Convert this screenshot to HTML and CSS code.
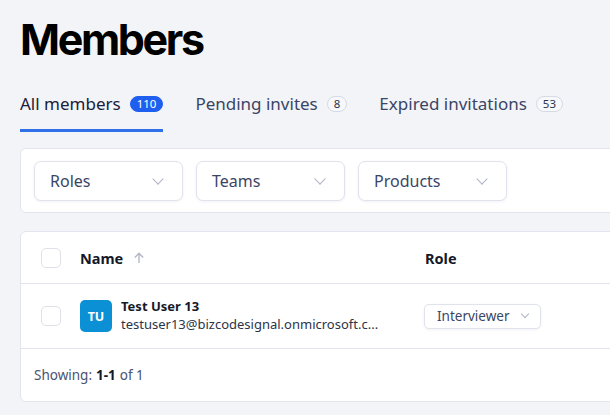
FILE: index.html
```html
<!DOCTYPE html>
<html lang="en">
<head>
    <meta charset="UTF-8">
    <title>Members</title>
    <link rel="stylesheet" href="styles.css">
</head>
<body>
    <div class="page">
        <h1 class="page-title">Members</h1>

        <!-- Tabs -->
        <div class="tabs">
            <div class="tab active">All members <span class="count">110</span></div>
            <div class="tab">Pending invites <span class="count">8</span></div>
            <div class="tab">Expired invitations <span class="count">53</span></div>
        </div>

        <!-- Filters -->
        <div class="card filters">
            <div class="select">Roles <span class="chev"></span></div>
            <div class="select">Teams <span class="chev"></span></div>
            <div class="select">Products <span class="chev"></span></div>
        </div>

        <!-- Members table -->
        <div class="card table">
            <div class="row head">
                <div class="cell check"><span class="box"></span></div>
                <div class="cell name">Name
                    <svg class="sort" width="12" height="12" viewBox="0 0 12 12"><path d="M6 11V1.5M1.8 5.5L6 1.3l4.2 4.2" fill="none" stroke="#b4b8c8" stroke-width="1.4"/></svg>
                </div>
                <div class="cell role">Role</div>
            </div>
            <div class="row member">
                <div class="cell check"><span class="box"></span></div>
                <div class="cell name">
                    <div class="avatar">TU</div>
                    <div class="who">
                        <div class="who-name">Test User 13</div>
                        <div class="who-mail">testuser13@bizcodesignal.onmicrosoft.c...</div>
                    </div>
                </div>
                <div class="cell role">
                    <div class="select small">Interviewer <span class="chev"></span></div>
                </div>
            </div>
            <div class="foot">Showing: <b>1-1</b> of 1</div>
        </div>
    </div>
</body>
</html>
```

FILE: styles.css
```css
:root {
    --bg: #f3f4f8;
    --line: #e3e5ee;
    --ink: #11131a;
    --text: #3d4663;
    --blue: #2f6fe8;
}

body {
    margin: 0;
    background: var(--bg);
    font-family: 'Noto Sans', 'Open Sans', sans-serif;
    color: var(--text);
    overflow: hidden;
}

.page {
    width: 720px;
    padding: 0 0 0 20px;
}

.page-title {
    font-family: Inter, sans-serif;
    font-size: 43px;
    font-weight: 700;
    letter-spacing: -0.055em;
    color: #000;
    margin: 0;
    padding-top: 12px;
    line-height: 54px;
}

/* tabs: underline sits 16px above the filter card */
.tabs {
    display: flex;
    gap: 32px;
    margin-top: 20px;
    height: 62px;
}
.tab {
    font-size: 17px;
    color: #3a4566;
    height: 46px;
    display: flex;
    align-items: center;
    gap: 9px;
    padding-bottom: 8px;
    box-sizing: border-box;
    border-bottom: 3px solid transparent;
}
.tab.active {
    color: #1a2038;
    border-bottom-color: var(--blue);
}
.count {
    font-size: 11.5px;
    line-height: 14px;
    padding: 0 6px;
    border-radius: 8px;
    border: 1px solid #d7dae4;
    color: #2d344a;
    background: #f7f8fb;
}
.tab.active .count {
    background: #1f5ff0;
    border-color: #1f5ff0;
    color: #fff;
}

.card {
    background: #fff;
    border: 1px solid var(--line);
    border-radius: 6px;
}

.filters {
    display: flex;
    gap: 13px;
    padding: 12px 13px 11px;
    height: 40px;
    margin-bottom: 18px;
}

.select {
    width: 149px;
    height: 40px;
    box-sizing: border-box;
    border: 1px solid #e0e2ec;
    border-radius: 7px;
    box-shadow: 0 1px 3px rgba(30, 40, 80, 0.06);
    display: flex;
    align-items: center;
    justify-content: space-between;
    padding: 0 20px 0 15px;
    font-size: 16px;
    color: #3b4563;
    background: #fff;
}
.chev {
    width: 7px;
    height: 7px;
    border-right: 1.3px solid #aeb3c6;
    border-bottom: 1.3px solid #aeb3c6;
    transform: rotate(45deg);
    margin-top: -5px;
}
.select.small {
    width: 117px;
    height: 25px;
    font-size: 13.5px;
    padding: 0 12px 0 12px;
    border-radius: 5px;
    margin-left: -1px;
}
.select.small .chev {
    width: 5px;
    height: 5px;
    margin-top: -4px;
}

.row {
    display: flex;
    align-items: center;
    border-bottom: 1px solid var(--line);
}
.row.head { height: 51px; }
.row.member { height: 64px; }

.cell.check {
    width: 59px;
    padding-left: 20px;
    box-sizing: border-box;
}
.box {
    display: block;
    width: 18px;
    height: 18px;
    border: 1px solid #dfe1ea;
    border-radius: 5px;
}
.cell.name {
    width: 345px;
    display: flex;
    align-items: center;
    gap: 9px;
}
.head .cell {
    font-size: 14.5px;
    font-weight: 700;
    color: #141827;
}
.head .cell.name { gap: 10px; }

.avatar {
    width: 32px;
    height: 32px;
    border-radius: 5px;
    background: #0b90d6;
    color: #fff;
    font-size: 12.5px;
    font-weight: 700;
    display: flex;
    align-items: center;
    justify-content: center;
}
.who-name {
    font-size: 13px;
    font-weight: 700;
    color: #151a28;
    line-height: 17px;
}
.who-mail {
    font-size: 13px;
    color: #2c3347;
    line-height: 19px;
}

.foot {
    height: 52px;
    display: flex;
    align-items: center;
    gap: 4px;
    padding-left: 13px;
    font-size: 13.5px;
    color: #4a5370;
}
.foot b { color: #141827; }
```
